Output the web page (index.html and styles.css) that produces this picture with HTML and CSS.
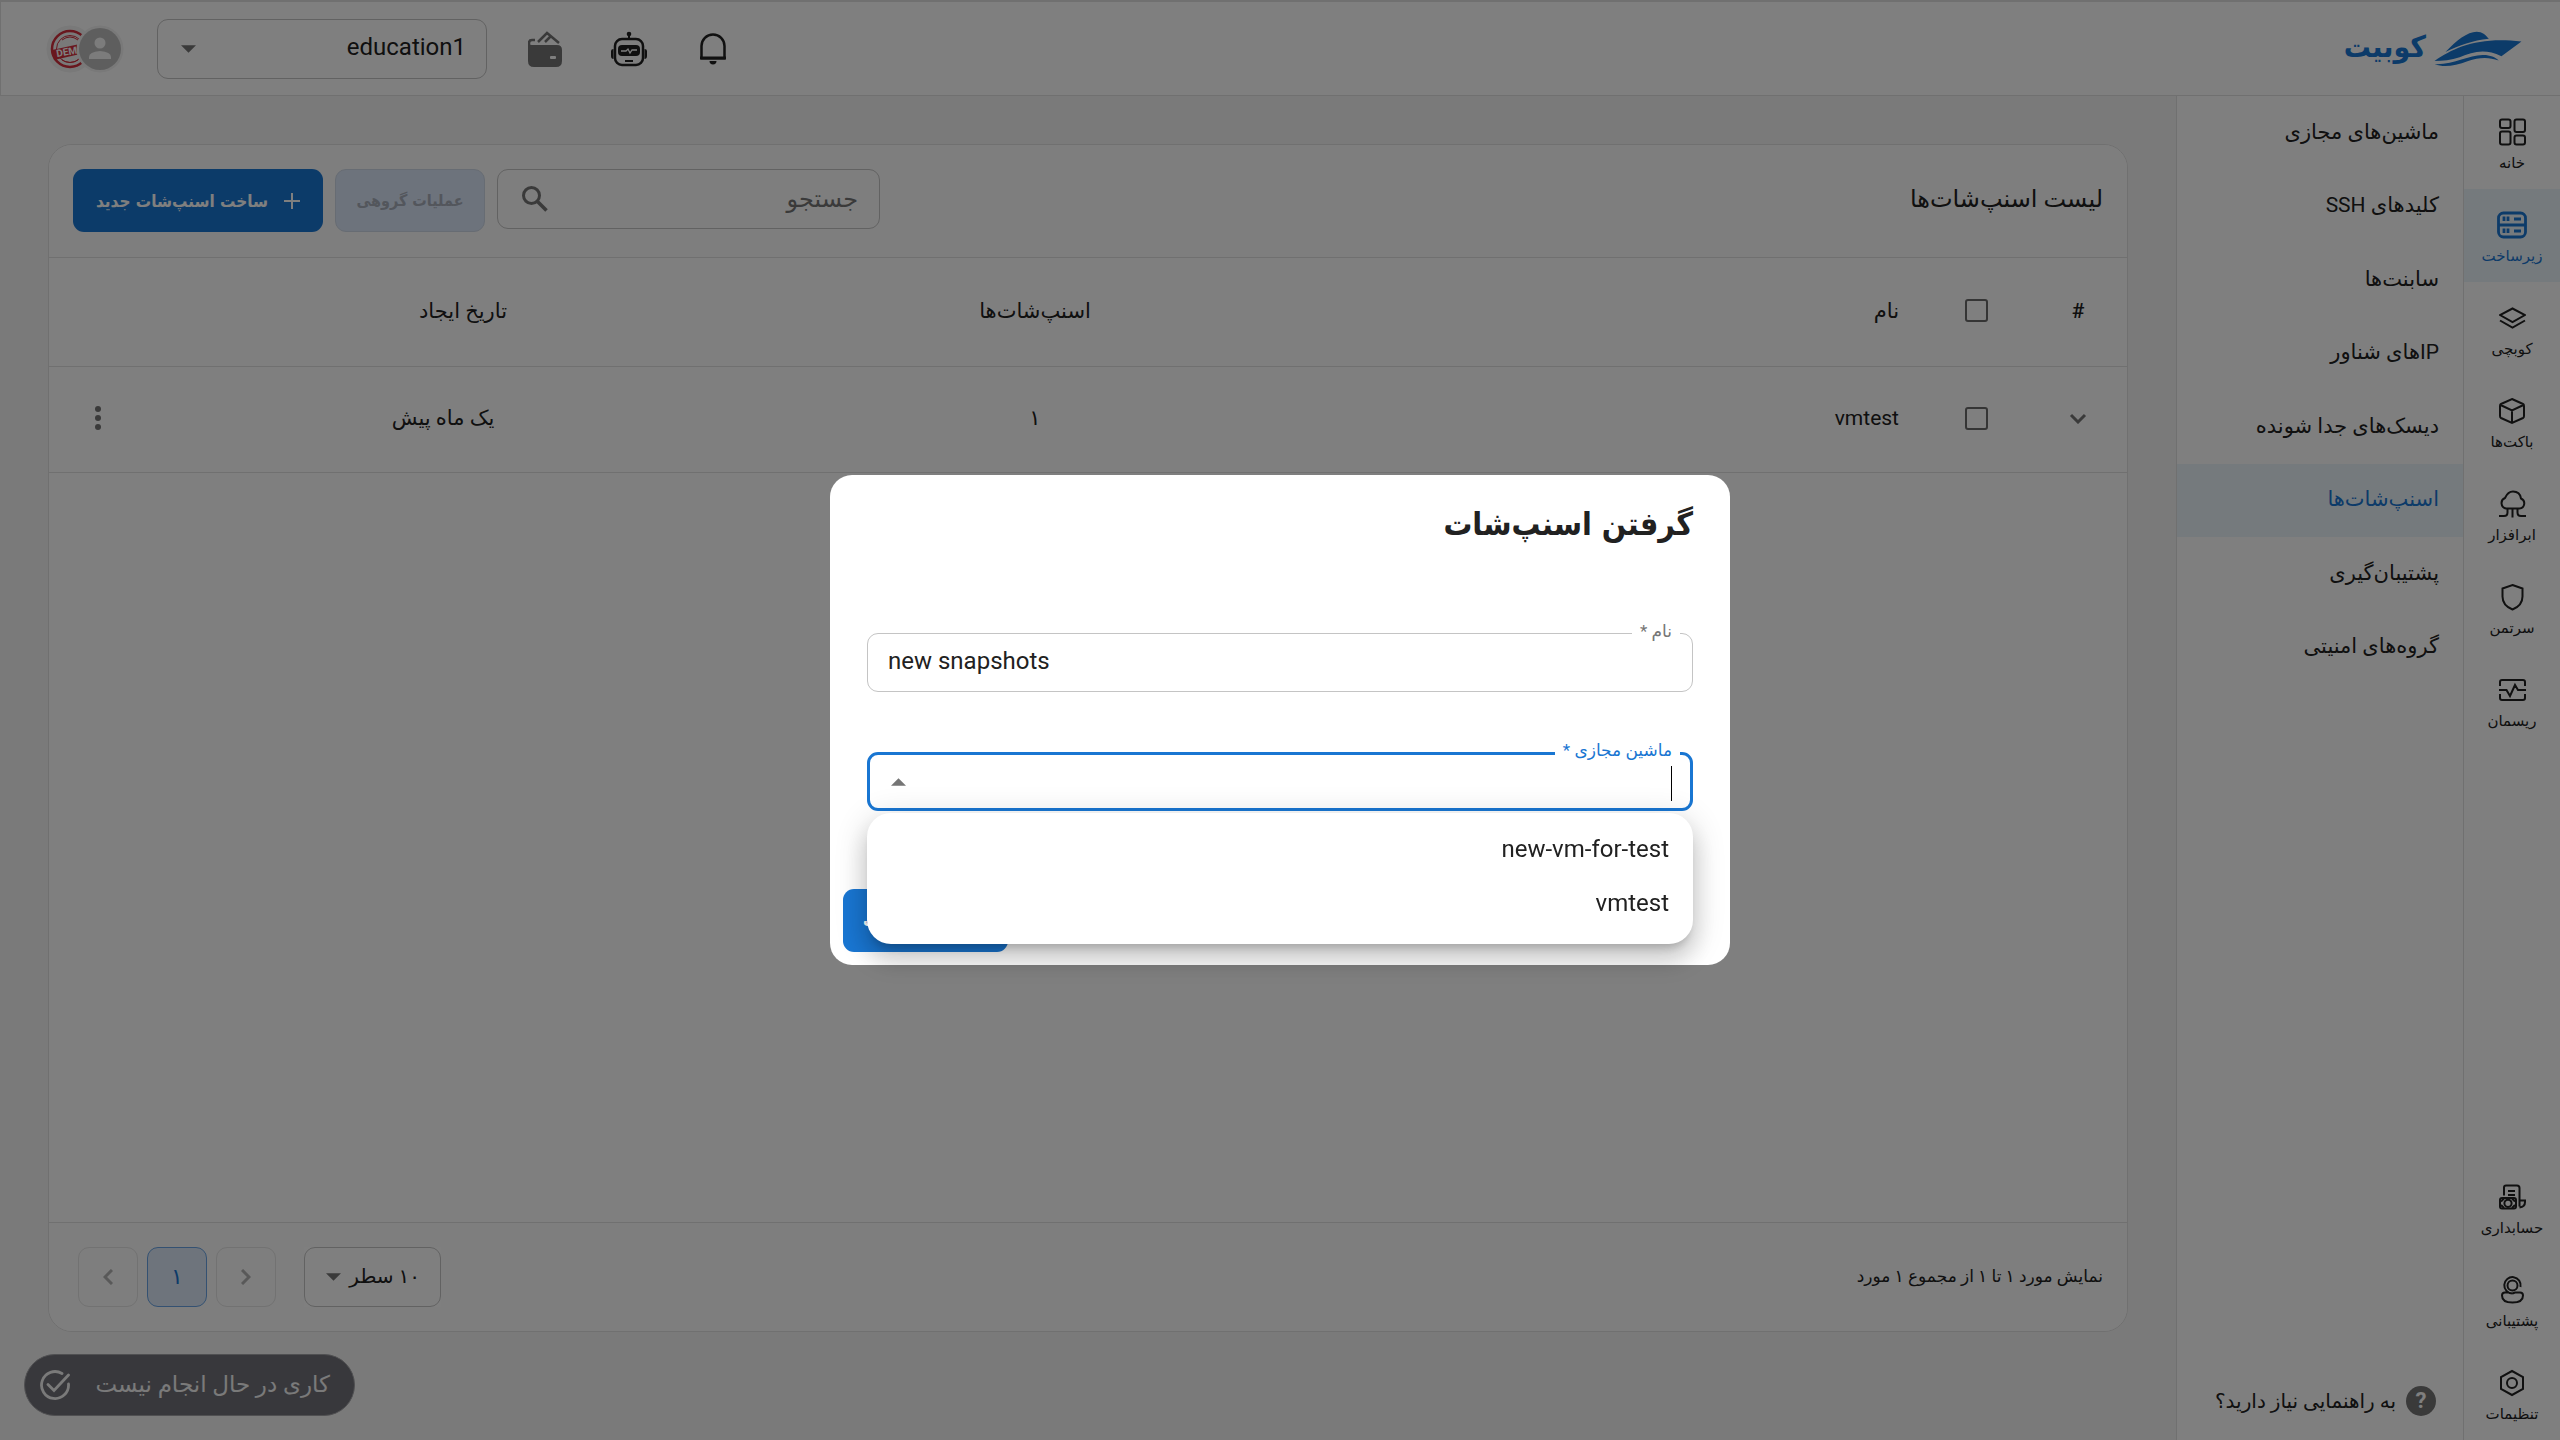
FILE: index.html
```
<!DOCTYPE html>
<html lang="fa" dir="rtl">
<head>
<meta charset="utf-8">
<meta name="viewport" content="width=device-width, initial-scale=1">
<title>کوبیت - اسنپ‌شات‌ها</title>
<link rel="stylesheet" href="styles.css">
</head>
<body>
<div class="app">
  <header class="topbar">
    <a class="brand" href="#">
      <svg class="brand-mark" viewBox="0 0 258 106" aria-hidden="true"><path d="M33 62C65 28 98 2 125 2c17 0 26 9 36 21C112 28 76 42 33 62z"/><path d="M1 88C60 48 130 16 257 31l-59 43c-50-24-85-12-123 3C50 86 25 88 1 88z"/><path d="M1 98c60 2 100-28 144-27 20 0 35 7 45 16-30-12-60-9-90 1-40 15-70 20-99 10z"/></svg>
      <span>کوبیت</span>
    </a>
    <div class="tools">
      <button class="icon-btn" type="button" aria-label="اعلان‌ها">
        <svg width="28" height="34" viewBox="0 0 28 34"><path d="M2.500 26.500V14a11.500 11.500 0 0 1 23 0v12.500z" fill="none" stroke="currentColor" stroke-width="2.500"/><path d="M1 24.500h26V27H1zM10.500 29h7a3.500 3.500 0 0 1-7 0z" fill="currentColor"/></svg>
      </button>
      <button class="icon-btn" type="button" aria-label="دستیار">
        <svg width="36" height="36" viewBox="0 0 36 36"><rect x="4" y="8" width="28" height="26" rx="7" fill="none" stroke="currentColor" stroke-width="2.500"/><rect x="7" y="14" width="22" height="11" rx="4" fill="currentColor"/><path d="M10 20h5l2-2 2 4 2-3h5" fill="none" stroke="#fff" stroke-width="1.300"/><path d="M18 8V3M14 30h8" stroke="currentColor" stroke-width="2"/><circle cx="18" cy="3" r="2.300" fill="currentColor"/><path d="M0 20q0-2 2.500-2v10Q0 28 0 25zM36 20q0-2-2.500-2v10q2.500 0 2.500-3z" fill="currentColor"/></svg>
      </button>
      <button class="icon-btn muted" type="button" aria-label="کیف پول">
        <svg width="34" height="36" viewBox="0 0 34 36"><path d="M0 11q0 3 4 3h25q5 0 5 5v11q0 6-6 6H6q-6 0-6-6z" fill="currentColor"/><rect x="22" y="25" width="6" height="3" rx="1" fill="#fff"/><path d="M1 14v-2q0-3 3-3h3M10 11l9-9 12 10M17 11l5-5" fill="none" stroke="currentColor" stroke-width="2.500"/></svg>
      </button>
    </div>
    <div class="select project">
      <select aria-label="پروژه"><option>education1</option></select>
      <svg class="caret" viewBox="0 0 14 7" aria-hidden="true"><path d="M0 0h14L7 7z"/></svg>
    </div>
    <button class="avatars" type="button" aria-label="حساب کاربری">
      <svg width="78" height="48" viewBox="0 0 78 48">
        <circle cx="24" cy="24" r="23.500" fill="#f2f2f2"/>
        <g fill="none" stroke="#d32f3c"><circle cx="24" cy="24" r="18" stroke-width="2.500"/><circle cx="24" cy="24" r="13.500" stroke-width="1"/><path d="M16 15q8-6 16 0M16 35q8 5 16 0"/></g>
        <path d="M6 25l37-8v10L8 35z" fill="#d32f3c"/>
        <text class="stamp" x="11" y="32" transform="rotate(-10 11 32)" direction="ltr">DEMO</text>
        <circle cx="54" cy="24" r="23.500" fill="#f2f2f2"/><circle cx="54" cy="24" r="21" fill="#bdbdbd"/>
        <circle cx="54" cy="18" r="5.500" fill="#f8f8f8"/><path d="M43 34v-2q0-5 11-6 11 1 11 6v2z" fill="#f8f8f8"/>
      </svg>
    </button>
  </header>

  <div class="body">
    <nav class="rail" aria-label="بخش‌ها">
      <a href="#"><svg width="27" height="27" viewBox="0 0 27 27"><rect x="1" y="1" width="10.500" height="8.500" rx="2"/><rect x="1" y="13" width="10.500" height="13" rx="2"/><rect x="15.500" y="1" width="10.500" height="12.500" rx="2"/><rect x="15.500" y="17" width="10.500" height="9" rx="2"/></svg><span>خانه</span></a>
      <a href="#" class="active"><svg width="30" height="27" viewBox="0 0 30 27"><g stroke-width="2.800"><rect x="1.500" y="1.500" width="27" height="24" rx="5"/><path d="M1 13.500h28M7 5v4.500M11 5v4.500M17 7.500h7M7 17v4.500M11 17v4.500M17 19.500h7"/></g></svg><span>زیرساخت</span></a>
      <a href="#"><svg width="27" height="22" viewBox="0 0 27 22"><path d="M13.500 1.500L26 8l-12.500 7L1 8zM1 13.500l12.500 7 12.500-7"/></svg><span>کوبچی</span></a>
      <a href="#"><svg width="26" height="27" viewBox="0 0 26 27"><path d="M13 1.500l11 5q1 .5 1 2v10q0 1.500-1 2l-11 5-11-5q-1-.5-1-2v-10q0-1.500 1-2zM1.500 7.500L13 13l11.500-5.500M13 13v12"/></svg><span>باکت‌ها</span></a>
      <a href="#"><svg width="27" height="27" viewBox="0 0 27 27"><path d="M7 18a5.500 5.500 0 0 1-1-10.500C8 3 11 1 14 1q7 0 8 7a5.200 5.200 0 0 1-1.500 10zM13.500 18v9M8.500 18v4q0 3.500-3.500 3.500H0M18.500 18v4q0 3.500 3.500 3.500h5"/></svg><span>ابرافزار</span></a>
      <a href="#"><svg width="23" height="27" viewBox="0 0 23 27"><path d="M11.500 1.500l10 3.500v8q0 9-10 13-10-4-10-13V5z"/></svg><span>سرتمن</span></a>
      <a href="#"><svg width="27" height="22" viewBox="0 0 27 22"><path d="M1 7V3q0-2 2-2h21q2 0 2 2v4M0 11h7.500l3.500 6 5-11 3 5h8M1 15v4q0 2 2 2h21q2 0 2-2v-4"/></svg><span>ریسمان</span></a>
      <a href="#" class="push"><svg width="27" height="25" viewBox="0 0 27 25"><path d="M5 11V3q0-2 2-2h11q2.500 0 2.500 2.500V22M9 6.500h7M9 10.500h7M20.500 16H26v1.500q0 5-5.500 5.500"/><rect x="1" y="13.500" width="16" height="10.500" rx="2"/><circle cx="9" cy="18.800" r="3.600"/><path d="M2 17l3-3M13 14l3 3M2 20.500l3 3M16 20.500l-3 3"/></svg><span>حسابداری</span></a>
      <a href="#"><svg width="23" height="27" viewBox="0 0 23 27"><circle cx="11.500" cy="9" r="5"/><path d="M19.500 10.500A8.200 8.200 0 1 0 11.500 17M8 16H4q-3 0-3 3 0 7 10.500 7T22 19q0-3-3-3h-5l-2.500 1"/></svg><span>پشتیبانی</span></a>
      <a href="#"><svg width="24" height="27" viewBox="0 0 24 27"><path d="M12 1.500l11 6v12l-11 6-11-6v-12z"/><circle cx="12" cy="13.500" r="5"/></svg><span>تنظیمات</span></a>
    </nav>

    <nav class="submenu" aria-label="زیرساخت">
      <ul>
        <li><a href="#">ماشین‌های مجازی</a></li>
        <li><a href="#">کلیدهای SSH</a></li>
        <li><a href="#">سابنت‌ها</a></li>
        <li><a href="#">IPهای شناور</a></li>
        <li><a href="#">دیسک‌های جدا شونده</a></li>
        <li><a href="#" class="active">اسنپ‌شات‌ها</a></li>
        <li><a href="#">پشتیبان‌گیری</a></li>
        <li><a href="#">گروه‌های امنیتی</a></li>
      </ul>
      <a class="help" href="#"><span class="help-mark">?</span><span>به راهنمایی نیاز دارید؟</span></a>
    </nav>

    <main class="content">
      <section class="card">
        <div class="card-head">
          <h1>لیست اسنپ‌شات‌ها</h1>
          <label class="search">
            <input type="search" placeholder="جستجو" aria-label="جستجو">
            <svg width="26" height="26" viewBox="0 0 26 26" aria-hidden="true"><circle cx="9.500" cy="9.500" r="8" fill="none" stroke="currentColor" stroke-width="3"/><path d="M15.500 15.500L24.500 24.500" stroke="currentColor" stroke-width="3.500"/></svg>
          </label>
          <button class="btn group" type="button" disabled>عملیات گروهی</button>
          <button class="btn create" type="button"><svg width="16" height="16" viewBox="0 0 16 16" aria-hidden="true"><path d="M8 0v16M0 8h16" stroke="currentColor" stroke-width="2"/></svg>ساخت اسنپ‌شات جدید</button>
        </div>
        <table>
          <colgroup><col class="c-num"><col class="c-check"><col><col><col><col class="c-act"></colgroup>
          <thead>
            <tr><th>#</th><th><input type="checkbox" aria-label="انتخاب همه"></th><th class="name">نام</th><th>اسنپ‌شات‌ها</th><th class="date">تاریخ ایجاد</th><th></th></tr>
          </thead>
          <tbody>
            <tr>
              <td><button class="plain" type="button" aria-label="باز کردن"><svg width="18" height="11" viewBox="0 0 18 11"><path d="M2 2l7 7 7-7" fill="none" stroke="currentColor" stroke-width="3"/></svg></button></td>
              <td><input type="checkbox" aria-label="انتخاب vmtest"></td>
              <td class="name">vmtest</td><td>۱</td><td>یک ماه پیش</td>
              <td><button class="plain" type="button" aria-label="گزینه‌ها"><svg width="6" height="24" viewBox="0 0 6 24" fill="currentColor"><circle cx="3" cy="3" r="3"/><circle cx="3" cy="12" r="3"/><circle cx="3" cy="21" r="3"/></svg></button></td>
            </tr>
          </tbody>
        </table>
        <div class="card-foot">
          <p>نمایش مورد ۱ تا ۱ از مجموع ۱ مورد</p>
          <div class="select rows">
            <select aria-label="تعداد سطر"><option>۱۰ سطر</option></select>
            <svg class="caret" viewBox="0 0 14 7" aria-hidden="true"><path d="M0 0h14L7 7z"/></svg>
          </div>
          <div class="pager">
            <button type="button" disabled aria-label="قبلی"><svg width="10" height="16" viewBox="0 0 10 16"><path d="M1 1l7 7-7 7"/></svg></button>
            <button type="button" class="current">۱</button>
            <button type="button" disabled aria-label="بعدی"><svg width="10" height="16" viewBox="0 0 10 16"><path d="M9 1L2 8l7 7"/></svg></button>
          </div>
        </div>
      </section>
    </main>
  </div>
  <div class="toast" role="status">
    <span>کاری در حال انجام نیست</span>
    <svg width="30" height="30" viewBox="0 0 30 30" aria-hidden="true"><path d="M22 3.500A13.500 13.500 0 1 0 28.500 14M8 14.500l6 6L28.500 5" fill="none" stroke="currentColor" stroke-width="2.800" stroke-linecap="round"/></svg>
  </div>
</div>

<div class="backdrop">
  <form class="dialog" role="dialog" aria-labelledby="dialog-title">
    <h2 id="dialog-title">گرفتن اسنپ‌شات</h2>
    <div class="field">
      <label for="snap-name">نام *</label>
      <input id="snap-name" type="text" dir="ltr" value="new snapshots">
    </div>
    <div class="field focused">
      <label for="snap-vm">ماشین مجازی *</label>
      <i class="cursor"></i>
      <input id="snap-vm" type="text" role="combobox" aria-expanded="true" aria-controls="vm-list">
      <svg class="caret" viewBox="0 0 14 7" aria-hidden="true"><path d="M0 7h14L7 0z"/></svg>
      <ul class="options" id="vm-list" role="listbox">
        <li role="option">new-vm-for-test</li>
        <li role="option">vmtest</li>
      </ul>
    </div>
    <button class="btn submit" type="button">گرفتن اسنپ‌شات</button>
  </form>
</div>
</body>
</html>
```
FILE: styles.css
```
* { box-sizing: border-box; }

:root {
  --text: #212121;
  --muted: #757575;
  --blue: #1976d2;
  --line: #e0e0e0;
  --border: #c4c4c4;
  --tint: #ebf4fb;
  --regular: Roboto, "DejaVu Sans", sans-serif;
  --bold: "DejaVu Sans Condensed", "DejaVu Sans", sans-serif;
}

body { margin: 0; font: 21px/32px var(--regular); color: var(--text); }
h1, h2, p, ul { margin: 0; padding: 0; }
ul { list-style: none; }
a { color: inherit; text-decoration: none; }
button, input, select { font: inherit; color: inherit; }
button { border: 0; padding: 0; background: none; }
svg { display: block; flex: none; }

.app { display: flex; flex-direction: column; min-height: 100vh; background: #f5f5f5; }

/* Top bar */
.topbar {
  display: flex; align-items: center; height: 96px; padding: 0 38px 0 45px;
  background: #fff; border: 1px solid var(--line); border-width: 2px 0 1px 1px;
}
.brand { display: flex; align-items: center; gap: 8px; color: var(--blue); font: bold 30px/48px var(--bold); }
.brand span { padding-bottom: 3px; }
.brand-mark { width: 88px; height: 36px; fill: currentColor; }
.tools { display: flex; gap: 48px; margin-inline: auto 40px; }
.icon-btn { display: grid; place-items: center; width: 36px; height: 36px; }
.icon-btn.muted { color: var(--muted); }
.avatars { margin-inline-start: 33px; }
.stamp { font: bold 10px Roboto, sans-serif; fill: #fff; }

.select { position: relative; display: flex; align-items: center; background: #fff; }
.select select {
  appearance: none; width: 100%; height: 60px; padding: 0 20px 3px;
  border: 1px solid var(--border); border-radius: 11px; background: none;
}
.caret { width: 15px; height: 8px; fill: var(--muted); }
.select .caret { position: absolute; left: 24px; pointer-events: none; }
.project { width: 330px; }
.project select { font-size: 24px; }

.body { display: flex; flex: 1; }

/* Navigation */
.rail { display: flex; flex-direction: column; width: 97px; background: #fff; border-left: 1px solid var(--line); }
.rail a { display: flex; flex-direction: column; align-items: center; height: 93px; padding-top: 20px; font-size: 15px; line-height: 24px; }
.rail svg { height: 32px; margin-bottom: 3px; fill: none; stroke: currentColor; stroke-width: 2; }
.rail .active, .submenu .active { color: var(--blue); background: var(--tint); }
.rail .push { margin-top: auto; }

.submenu { display: flex; flex-direction: column; width: 287px; background: #fff; border-left: 1px solid var(--line); }
.submenu ul { display: grid; grid-auto-rows: 1fr; height: 588px; }
.submenu li { display: grid; }
.submenu li a { display: flex; align-items: center; padding: 0 24px 2px; }
.help { display: flex; align-items: center; gap: 10px; margin-top: auto; padding: 0 27px 23px; font-size: 20px; }
.help-mark { width: 30px; height: 30px; border-radius: 50%; background: var(--muted); color: #fff; font: bold 22px/30px Roboto, sans-serif; text-align: center; }

/* Snapshot list */
.content { display: flex; flex: 1; padding: 48px 48px 108px; }
.card { display: flex; flex-direction: column; flex: 1; background: #fff; border: 1px solid var(--line); border-radius: 24px; overflow: hidden; }
.card-head, .card-foot { display: flex; align-items: center; padding: 0 24px; background: #fcfcfc; }
.card-head { align-items: flex-start; height: 113px; padding-top: 24px; gap: 12px; border-bottom: 1px solid var(--line); }
h1 { margin-left: auto; font-size: 24px; font-weight: 500; line-height: 60px; }

.search { display: flex; align-items: center; width: 383px; height: 60px; padding: 0 21px 0 24px; border: 1px solid var(--border); border-radius: 11px; color: var(--muted); }
.search input { flex: 1; min-width: 0; padding: 0; border: 0; background: none; font-size: 24px; outline: 0; }
.search input::placeholder { color: var(--muted); opacity: 1; }

.btn { display: flex; align-items: center; justify-content: center; height: 63px; border-radius: 11px; font: bold 17px/32px var(--bold); }
.group { width: 150px; border: 1px solid #ced8e6; background: #dae6f8; color: #a6adb8; font-size: 16px; }
.create { gap: 16px; width: 250px; background: var(--blue); color: #fff; }

table { width: 100%; border-collapse: collapse; table-layout: fixed; }
th, td { padding: 0 24px 2px; height: 106px; border-bottom: 1px solid var(--line); text-align: center; font-weight: 400; }
th { height: 108px; font-weight: 500; }
th.date { padding-left: 64px; }
.name { text-align: right; }
.c-num { width: 98px; }
.c-check { width: 106px; }
.c-act { width: 98px; }
th input, td input { appearance: none; display: block; width: 23px; height: 23px; margin: 0 auto; border: 2px solid #6a6a6a; border-radius: 3px; }
.plain { display: grid; place-items: center; margin: 0 auto; color: var(--muted); }

.card-foot { height: 109px; margin-top: auto; border-top: 1px solid var(--line); }
.card-foot p { margin-left: auto; padding-bottom: 2px; font-size: 17px; }
.rows { width: 137px; }
.rows select { font-size: 20px; }
.rows .caret { left: 22px; }
.pager { display: flex; gap: 9px; margin: 0 28px 0 5px; }
.pager button { display: grid; place-items: center; width: 60px; height: 60px; border: 1px solid #e4e4e4; border-radius: 11px; }
.pager svg { fill: none; stroke: #b2b2b2; stroke-width: 3; }
.pager .current { border-color: #68a3e4; background: #dde9f8; color: var(--blue); font-size: 22px; }

/* Background task status */
.toast {
  position: absolute; left: 24px; bottom: 24px; display: flex; align-items: center; justify-content: space-between;
  width: 331px; height: 62px; padding: 0 24px 0 15px; border: 1px solid #a0a0a4; border-radius: 31px;
  background: #707078; color: #f4f4f4; font-size: 23px;
}

/* Dialog */
.backdrop { position: fixed; inset: 0; display: flex; align-items: center; justify-content: center; background: rgba(0, 0, 0, .5); }
.dialog { display: flex; flex-direction: column; width: 900px; padding: 24px 13px 13px; border-radius: 22px; background: #fff; }
h2 { margin: 0 24px 84px; font: bold 32px/50px var(--bold); }
.field { position: relative; display: flex; align-items: center; height: 59px; margin: 0 24px 60px; padding: 0 20px; border: 1px solid var(--border); border-radius: 11px; }
.field label { position: absolute; top: -19px; right: 12px; padding: 0 8px; background: #fff; color: var(--muted); font-size: 17px; }
.field input { flex: 1; min-width: 0; padding: 0 0 4px; border: 0; background: none; outline: 0; font-size: 24px; }
.field.focused { margin-bottom: 78px; padding: 0 18px 0 21px; border: 3px solid var(--blue); }
.field.focused label { top: -21px; right: 10px; color: var(--blue); }
.cursor { width: 1px; height: 38px; background: #000; }
.options {
  position: absolute; z-index: 1; top: 58px; left: -3px; right: -3px; padding: 9px 24px 14px; border-radius: 24px; background: #fff;
  box-shadow: 0 8px 10px -5px rgba(0, 0, 0, .2), 0 16px 24px 2px rgba(0, 0, 0, .14), 0 6px 30px 5px rgba(0, 0, 0, .12);
  font-size: 24px; line-height: 54px;
}
.submit { width: 165px; align-self: flex-end; background: var(--blue); color: #fff; font-size: 16px; }
```
